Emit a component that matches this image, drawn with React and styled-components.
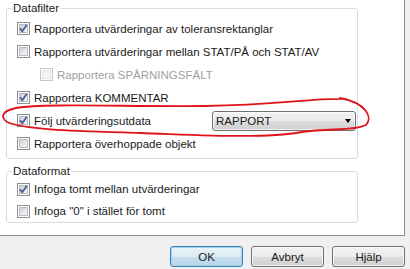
import React from "react";
import styled, { createGlobalStyle, css } from "styled-components";

const GlobalStyle = createGlobalStyle`
  html, body {
    margin: 0;
    padding: 0;
    background: #f0f0f0;
  }
  body {
    font-family: "Liberation Sans", Arial, sans-serif;
    font-size: 11.5px;
    color: #1a1a1a;
  }
`;

const Window = styled.div`
  position: relative;
  width: 410px;
  height: 269px;
  background: #f0f0f0;
  overflow: hidden;
  display: flex;
  flex-direction: column;
`;

const Panel = styled.div`
  width: 405px;
  height: 236px;
  box-sizing: border-box;
  padding-top: 2px;
  background: #ffffff;
  border-right: 1px solid #898c95;
  border-bottom: 1px solid #898c95;
`;

const Group = styled.fieldset`
  margin: ${(p) => (p.$first ? "0" : "6px")} 0 0 6px;
  width: 352px;
  box-sizing: border-box;
  min-width: 0;
  padding: ${(p) => p.$pad};
  border: 1px solid #d5dfe5;
  border-radius: 3px;
`;

const Legend = styled.legend`
  margin-left: 5px;
  padding: 0 1px;
  line-height: 12px;
  color: #1a1a1a;
`;

const Row = styled.div`
  display: flex;
  align-items: center;
  height: ${(p) => p.$h || 23}px;
  padding-left: ${(p) => (p.$indent ? 33 : 10)}px;
`;

const Box = styled.span`
  position: relative;
  flex: none;
  width: 13px;
  height: 13px;
  box-sizing: border-box;
  border: 1px solid ${(p) => (p.$disabled ? "#c6c6c6" : "#8e8f8f")};
  background: #fff;

  &::before {
    content: "";
    position: absolute;
    inset: 1px;
    box-sizing: border-box;
    ${(p) =>
      p.$disabled
        ? css`
            background: #f4f4f4;
            border: 1px solid #e3e3e3;
          `
        : css`
            background: linear-gradient(135deg, #cbcfd5 0%, #e4e6e9 50%, #f7f7f7 100%);
            border: 1px solid #b9bdc3;
          `}
  }

  svg {
    position: absolute;
    left: 0;
    top: 0;
  }
`;

const Label = styled.span`
  margin-left: 4px;
  white-space: nowrap;
  color: ${(p) => (p.$disabled ? "#a0a0a0" : "#1a1a1a")};
`;

const Select = styled.div`
  margin-left: auto;
  margin-right: 1px;
  width: 144px;
  height: 20px;
  box-sizing: border-box;
  border: 1px solid #707070;
  border-radius: 3px;
  background: linear-gradient(#f2f2f2 0%, #ebebeb 50%, #dddddd 51%, #cfcfcf 100%);
  box-shadow: inset 0 0 0 1px rgba(255, 255, 255, 0.7);
  display: flex;
  align-items: center;
  justify-content: space-between;
  padding: 0 4px 0 3px;
  color: #1a1a1a;
`;

const Arrow = styled.span`
  width: 0;
  height: 0;
  border-left: 3.5px solid transparent;
  border-right: 3.5px solid transparent;
  border-top: 4px solid #000;
  margin-top: 1px;
`;

const ButtonBar = styled.div`
  display: flex;
  justify-content: flex-end;
  gap: 8px;
  padding: 10px 5px 0 0;
`;

const Button = styled.div`
  width: 73px;
  height: 21px;
  box-sizing: border-box;
  border: 1px solid ${(p) => (p.$default ? "#3c7fb1" : "#707070")};
  border-radius: 3px;
  background: ${(p) =>
    p.$default
      ? "linear-gradient(#eaf4fa 0%, #dbeaf4 50%, #c6dfef 51%, #b7d5ea 100%)"
      : "linear-gradient(#f2f2f2 0%, #ebebeb 50%, #dddddd 51%, #cfcfcf 100%)"};
  box-shadow: inset 0 0 0 1px ${(p) => (p.$default ? "#a5d3f0" : "rgba(255,255,255,0.75)")};
  display: flex;
  align-items: center;
  justify-content: center;
  color: #1a1a1a;
`;

const Marker = styled.svg`
  position: absolute;
  left: 0;
  top: 0;
  pointer-events: none;
`;

function Check({ checked, disabled }) {
  return (
    <Box $disabled={disabled}>
      {checked && (
        <svg width="11" height="11" viewBox="0 0 11 11">
          <path d="M2.2 5.4 L4.3 8.2 L8.8 1.8" fill="none" stroke="#4a5f97" strokeWidth="1.9" />
        </svg>
      )}
    </Box>
  );
}

function Option({ checked, disabled, indent, h, children, extra }) {
  return (
    <Row $indent={indent} $h={h}>
      <Check checked={checked} disabled={disabled} />
      <Label $disabled={disabled}>{children}</Label>
      {extra}
    </Row>
  );
}

export default function App() {
  return (
    <>
      <GlobalStyle />
      <Window>
        <Panel>
          <Group $first $pad="3px 0 3px 0">
            <Legend>Datafilter</Legend>
            <Option checked>Rapportera utvärderingar av toleransrektanglar</Option>
            <Option>Rapportera utvärderingar mellan STAT/PÅ och STAT/AV</Option>
            <Option indent disabled>Rapportera SPÅRNINGSFÄLT</Option>
            <Option checked>Rapportera KOMMENTAR</Option>
            <Option
              checked
              extra={
                <Select>
                  <span>RAPPORT</span>
                  <Arrow />
                </Select>
              }
            >
              Följ utvärderingsutdata
            </Option>
            <Option>Rapportera överhoppade objekt</Option>
          </Group>

          <Group $pad="1px 0 0 0">
            <Legend>Dataformat</Legend>
            <Option checked h={22}>Infoga tomt mellan utvärderingar</Option>
            <Option h={22}>Infoga "0" i stället för tomt</Option>
          </Group>
        </Panel>

        <ButtonBar>
          <Button $default>OK</Button>
          <Button>Avbryt</Button>
          <Button>Hjälp</Button>
        </ButtonBar>

        <Marker width="410" height="269" viewBox="0 0 410 269">
          <path
            d="M346 99 C310 98 280 105 205 106 C130 107 45 103 16 108 C2 111 0 117 7 122 C24 130 80 131 140 133 C200 135 262 139 302 132 C330 128 354 131 366 125 C373 118 367 103 340 98"
            fill="none"
            stroke="#e0141c"
            strokeWidth="1.8"
            strokeLinecap="round"
          />
        </Marker>
      </Window>
    </>
  );
}
